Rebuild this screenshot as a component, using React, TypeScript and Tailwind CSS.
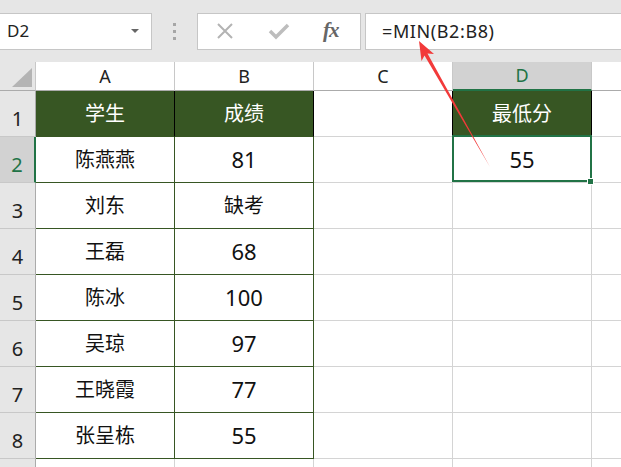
import React from "react";

const cols = ["A", "B", "C", "D"];

const rows: [string, string][] = [
  ["陈燕燕", "81"],
  ["刘东", "缺考"],
  ["王磊", "68"],
  ["陈冰", "100"],
  ["吴琼", "97"],
  ["王晓霞", "77"],
  ["张呈栋", "55"],
];

const font = "font-['Noto_Sans','Noto_Sans_CJK_SC',sans-serif]";

// digits render a little larger than the CJK text in the sheet
const sizeFor = (v: string) => (/^\d+$/.test(v) ? "text-[22px]" : "text-[20px]");

// toolbar with the name box and the formula bar
const FormulaBar = () => (
  <div className="flex h-[62px] items-center bg-[#e6e6e6]">
    <div className="flex h-[37px] w-[152px] items-center justify-between border border-l-0 border-[#c6c6c6] bg-white pl-[7px] pr-[12px]">
      <span className="text-[17px] text-[#222]">D2</span>
      <span className="h-0 w-0 border-x-[4px] border-t-[4px] border-x-transparent border-t-[#666]" />
    </div>
    <div className="flex w-[45px] flex-col items-center gap-[4px]">
      <span className="h-[3px] w-[3px] bg-[#a6a6a6]" />
      <span className="h-[3px] w-[3px] bg-[#a6a6a6]" />
      <span className="h-[3px] w-[3px] bg-[#a6a6a6]" />
    </div>
    <div className="flex h-[37px] w-[164px] items-center border border-[#c6c6c6] bg-white">
      <svg width="20" height="20" viewBox="0 0 20 20" className="ml-[17px]">
        <path d="M3 3 L17 17 M17 3 L3 17" stroke="#b3b3b3" strokeWidth="2" fill="none" />
      </svg>
      <svg width="22" height="20" viewBox="0 0 22 20" className="ml-[33px]">
        <path d="M2 10 L8 16 L20 4" stroke="#bdbdbd" strokeWidth="3.5" fill="none" />
      </svg>
      <span className="ml-[33px] font-['Liberation_Serif',serif] text-[21px] font-bold italic text-[#666] tracking-[-1px]">
        fx
      </span>
    </div>
    <div className="ml-[4px] flex h-[37px] flex-1 items-center border border-r-0 border-[#c6c6c6] bg-white pl-[16px]">
      <span className="text-[18px] tracking-[0.6px] text-[#222]">=MIN(B2:B8)</span>
    </div>
  </div>
);

const ColHeaders = () => (
  <>
    <div className="flex items-end justify-end border-r border-b border-r-[#c8c8c8] border-b-[#ababab] bg-[#e6e6e6] pr-[3px] pb-[3px]">
      <svg width="20" height="19" viewBox="0 0 20 19">
        <polygon points="20,0 20,19 0,19" fill="#b4b4b4" />
      </svg>
    </div>
    {cols.map((c) =>
      c === "D" ? (
        <div
          key={c}
          className="flex items-center justify-center border-r border-b-2 border-r-[#c8c8c8] border-b-[#217346] bg-[#d2d2d2] text-[18px] text-[#217346]"
        >
          {c}
        </div>
      ) : (
        <div
          key={c}
          className="flex items-center justify-center border-r border-b border-r-[#c8c8c8] border-b-[#ababab] text-[18px] text-[#222]"
        >
          {c}
        </div>
      )
    )}
    <div className="border-b border-b-[#ababab]" />
  </>
);

const RowHead = ({ n, active }: { n: number; active?: boolean }) => (
  <div
    className={`flex items-end justify-center pb-[2px] text-[20px] border-b border-r ${
      active
        ? "bg-[#d2d2d2] text-[#217346] border-b-[#c8c8c8] border-r-2 border-r-[#217346]"
        : "bg-[#e6e6e6] text-[#222] border-b-[#c8c8c8] border-r-[#ababab]"
    }`}
  >
    {n}
  </div>
);

export default function App() {
  return (
    <div className={`relative h-[467px] w-[621px] overflow-hidden bg-white ${font}`}>
      <FormulaBar />
      <div className="grid grid-cols-[36px_139px_139px_139px_139px_1fr] grid-rows-[29px_repeat(9,46px)]">
        <ColHeaders />

        {/* row 1: table headings */}
        <RowHead n={1} />
        <div className="flex items-center justify-center border-r border-b border-r-black border-b-[#375623] bg-[#375623] text-[20px] text-white">
          学生
        </div>
        <div className="flex items-center justify-center border-r border-b border-r-black border-b-[#375623] bg-[#375623] text-[20px] text-white">
          成绩
        </div>
        <div className="border-r border-b border-r-black border-b-[#d4d4d4]" />
        <div className="flex items-center justify-center border-r border-b border-r-black border-b-[#375623] bg-[#375623] text-[20px] text-white">
          最低分
        </div>
        <div className="border-b border-b-[#d4d4d4]" />

        {rows.map(([name, score], i) => (
          <React.Fragment key={name}>
            <RowHead n={i + 2} active={i === 0} />
            <div className="flex items-center justify-center border-r border-b border-[#375623] text-[20px] text-[#111]">
              {name}
            </div>
            <div className={`flex items-center justify-center border-r border-b border-[#375623] text-[#111] ${sizeFor(score)}`}>
              {score}
            </div>
            <div className="border-r border-b border-[#d4d4d4]" />
            {i === 0 ? (
              <div className="relative flex items-center justify-center border-r border-b border-[#d4d4d4] text-[22px] text-[#111]">
                55
                <div className="absolute -left-[1px] -top-[2px] -right-[1px] bottom-0 border-2 border-[#217346]" />
                <div className="absolute -right-[3px] -bottom-[3px] h-[7px] w-[7px] border border-white bg-[#217346]" />
              </div>
            ) : (
              <div className="border-r border-b border-[#d4d4d4]" />
            )}
            <div className="border-b border-[#d4d4d4]" />
          </React.Fragment>
        ))}

        {/* partial row 9 */}
        <div className="border-r border-[#ababab] bg-[#e6e6e6]" />
        <div className="border-r border-[#d4d4d4]" />
        <div className="border-r border-[#d4d4d4]" />
        <div className="border-r border-[#d4d4d4]" />
        <div className="border-r border-[#d4d4d4]" />
        <div />
      </div>

      {/* red annotation arrow */}
      <svg className="pointer-events-none absolute left-0 top-0" width="621" height="467">
        <polygon
          points="419,41 421.5,61 424.5,55.5 490,167 427.5,53.5 434,54"
          fill="#f23a3a"
        />
      </svg>
    </div>
  );
}
